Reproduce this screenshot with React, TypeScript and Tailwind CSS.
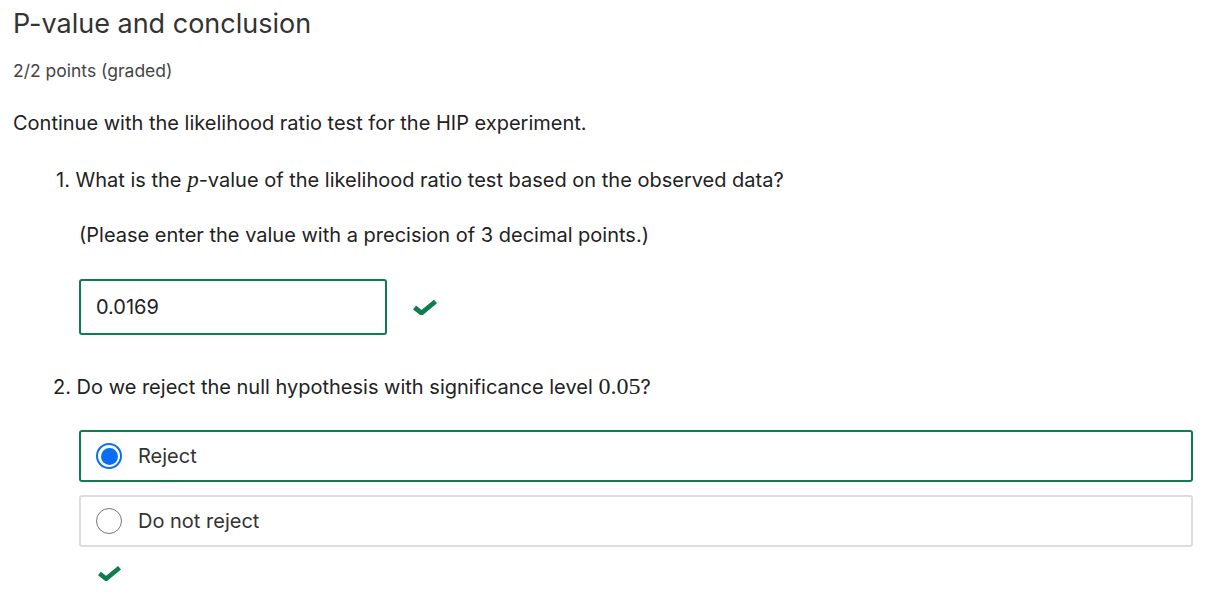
import React from 'react';

const Check = ({ className }: { className?: string }) => (
    <svg viewBox="0 0 24 15" className={className} fill="none">
        <path d="M1.5 7.5 L8.5 13 L22.5 1.5" stroke="#0d7d4d" strokeWidth="4.8" strokeLinecap="butt" strokeLinejoin="miter" />
    </svg>
);

const Math = ({ children }: { children: React.ReactNode }) => (
    <span className="text-[24px] leading-[20px]" style={{ fontFamily: '"Liberation Serif", "DejaVu Serif", serif' }}>
        {children}
    </span>
);

export default function App() {
    return (
        <div className="bg-white min-h-[600px] w-[1206px] text-[#222] px-[13px] pt-[6px]" style={{ fontFamily: 'Inter, "Noto Sans", sans-serif' }}>
            <h2 className="text-[27px] leading-[36px] text-[#333] font-normal">P-value and conclusion</h2>
            <div className="mt-[18px] text-[17.5px] leading-[22px] text-[#454545]">2/2 points (graded)</div>

            <p className="mt-[27px] text-[20px] leading-[28px]">Continue with the likelihood ratio test for the HIP experiment.</p>

            {/* question 1 */}
            <div className="mt-[29px] pl-[43px] text-[20px] leading-[28px]">
                1. What is the <span className="text-[23px] leading-[20px] italic" style={{ fontFamily: '"Liberation Serif", serif' }}>p</span>-value of the likelihood ratio test based on the observed data?
            </div>
            <div className="mt-[27px] pl-[66px] text-[20px] leading-[28px]">(Please enter the value with a precision of 3 decimal points.)</div>

            <div className="mt-[30px] pl-[66px] flex items-center">
                <div className="w-[308px] h-[56px] border-2 border-[#0d7d4d] rounded-[3px] flex items-center pl-[15px] text-[20px]">
                    0.0169
                </div>
                <Check className="w-[24px] h-[15px] ml-[26px]" />
            </div>

            {/* question 2 */}
            <div className="mt-[38px] pl-[40px] text-[20px] leading-[28px]">
                2. Do we reject the null hypothesis with significance level <Math>0.05</Math>?
            </div>

            <div className="mt-[29px] pl-[66px] flex flex-col gap-[13px]">
                <div className="h-[52px] border-2 border-[#0d7d4d] rounded-[3px] flex items-center pl-[15px]">
                    <span className="w-[26px] h-[26px] rounded-full border-2 border-[#0a6ef5] flex items-center justify-center">
                        <span className="w-[17px] h-[17px] rounded-full bg-[#0a6ef5]" />
                    </span>
                    <span className="ml-[16px] text-[20px] text-[#333]">Reject</span>
                </div>
                <div className="h-[52px] border-2 border-[#ddd] rounded-[3px] flex items-center pl-[15px]">
                    <span className="w-[26px] h-[26px] rounded-full border border-[#777] bg-white" />
                    <span className="ml-[16px] text-[20px] text-[#333]">Do not reject</span>
                </div>
            </div>

            <div className="pl-[85px] mt-[19px]">
                <Check className="w-[23px] h-[15px]" />
            </div>
        </div>
    );
}
